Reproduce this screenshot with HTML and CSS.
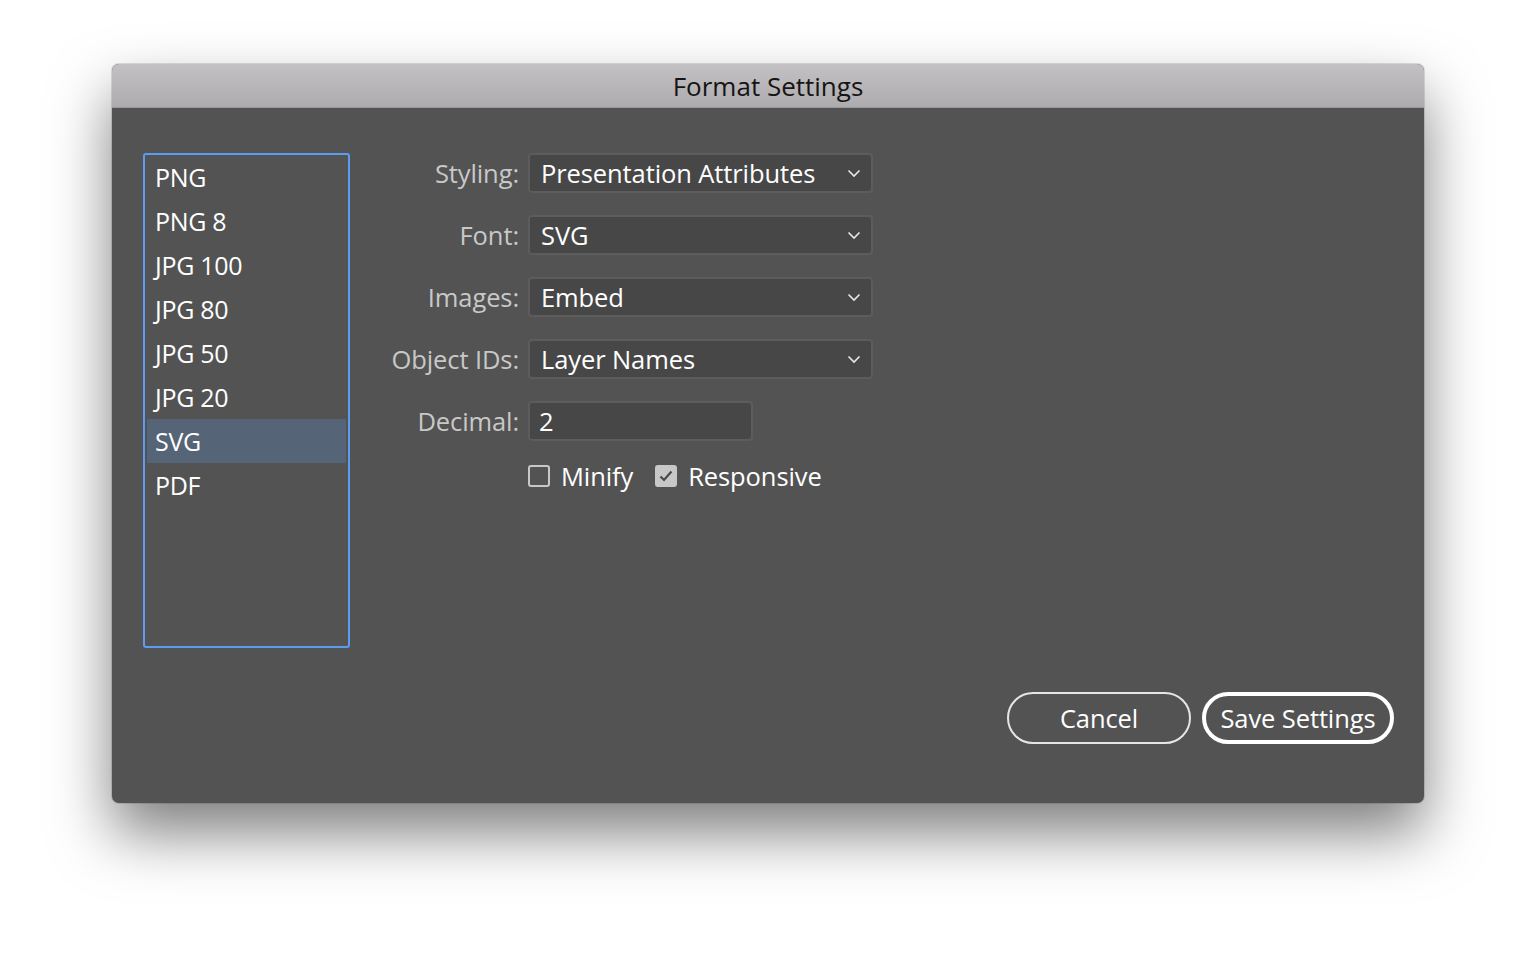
FILE: index.html
```html
<!DOCTYPE html>
<html lang="en">
  <head>
    <meta charset="UTF-8" />
    <title>Format Settings</title>
    <link rel="stylesheet" href="styles.css">
  </head>
  <body>
    <div class="window">
      <div class="titlebar">Format Settings</div>
      <div class="window-body">
        <div class="main">
          <!-- format list -->
          <ul class="format-list">
            <li>PNG</li>
            <li>PNG 8</li>
            <li>JPG 100</li>
            <li>JPG 80</li>
            <li>JPG 50</li>
            <li>JPG 20</li>
            <li class="selected">SVG</li>
            <li>PDF</li>
          </ul>

          <!-- options -->
          <div class="options">
            <div class="row">
              <label>Styling:</label>
              <div class="select">Presentation Attributes
                <svg class="chev" width="14" height="9" viewBox="0 0 14 9"><path d="M1.5 1.5 L7 7 L12.5 1.5" fill="none" stroke="#e8e8e8" stroke-width="1.6"/></svg>
              </div>
            </div>
            <div class="row">
              <label>Font:</label>
              <div class="select">SVG
                <svg class="chev" width="14" height="9" viewBox="0 0 14 9"><path d="M1.5 1.5 L7 7 L12.5 1.5" fill="none" stroke="#e8e8e8" stroke-width="1.6"/></svg>
              </div>
            </div>
            <div class="row">
              <label>Images:</label>
              <div class="select">Embed
                <svg class="chev" width="14" height="9" viewBox="0 0 14 9"><path d="M1.5 1.5 L7 7 L12.5 1.5" fill="none" stroke="#e8e8e8" stroke-width="1.6"/></svg>
              </div>
            </div>
            <div class="row">
              <label>Object IDs:</label>
              <div class="select">Layer Names
                <svg class="chev" width="14" height="9" viewBox="0 0 14 9"><path d="M1.5 1.5 L7 7 L12.5 1.5" fill="none" stroke="#e8e8e8" stroke-width="1.6"/></svg>
              </div>
            </div>
            <div class="row">
              <label>Decimal:</label>
              <div class="input">2</div>
            </div>
            <div class="checks">
              <span class="check"><span class="box"></span>Minify</span>
              <span class="check"><span class="box on">
                <svg width="16" height="14" viewBox="0 0 16 14"><path d="M2.5 7.5 L6 11 L13.5 2.5" fill="none" stroke="#4a4a4a" stroke-width="2.2"/></svg>
              </span>Responsive</span>
            </div>
          </div>
        </div>

        <div class="buttons">
          <button class="btn">Cancel</button>
          <button class="btn primary">Save Settings</button>
        </div>
      </div>
    </div>
  </body>
</html>
```

FILE: styles.css
```css
body {
  margin: 0;
  padding: 0 0 170px;
  background: #fff;
  font-family: "Open Sans", "Liberation Sans", sans-serif;
}
.window {
  margin: 64px 0 0 112px;
  width: 1312px;
  height: 739px;
  border-radius: 7px;
  overflow: hidden;
  background: #535353;
  box-shadow: 0 30px 60px rgba(0, 0, 0, 0.5), 0 0 0 1px rgba(0, 0, 0, 0.12);
  display: flex;
  flex-direction: column;
}
.titlebar {
  height: 43px;
  flex-shrink: 0;
  background: linear-gradient(#c3c1c3, #adabad);
  border-bottom: 1px solid #9a989a;
  color: #151515;
  font-size: 26px;
  line-height: 45px;
  text-align: center;
}
.window-body {
  flex: 1;
  display: flex;
  flex-direction: column;
  padding: 45px 30px 0 31px;
}
.main {
  display: flex;
  gap: 32px;
}
/* Format list */
.format-list {
  list-style: none;
  margin: 0;
  padding: 0 2px;
  width: 207px;
  height: 495px;
  border: 2px solid #5a9cf0;
  border-radius: 3px;
  box-sizing: border-box;
}
.format-list li {
  height: 44px;
  line-height: 44px;
  padding-left: 8px;
  color: #fff;
  font-size: 25px;
  letter-spacing: -0.3px;
}
.format-list li.selected {
  background: #566477;
}
/* Options */
.options {
  display: flex;
  flex-direction: column;
  gap: 22px;
}
.row {
  display: flex;
  align-items: center;
  gap: 9px;
}
.row label {
  width: 137px;
  flex-shrink: 0;
  text-align: right;
  white-space: nowrap;
  color: #c8c8c8;
  font-size: 25.5px;
  letter-spacing: -0.1px;
}
.select,
.input {
  height: 40px;
  box-sizing: border-box;
  background: #474747;
  border: 2px solid #5c5c5c;
  border-radius: 4px;
  color: #fff;
  font-size: 25.5px;
  letter-spacing: -0.1px;
  display: flex;
  align-items: center;
  padding-left: 11px;
}
.select {
  width: 345px;
  justify-content: space-between;
  padding-right: 10px;
}
.input {
  width: 225px;
  padding-left: 9px;
}
.checks {
  display: flex;
  gap: 22px;
  margin: -4px 0 0 146px;
}
.check {
  display: flex;
  align-items: center;
  gap: 11px;
  color: #fff;
  font-size: 25.5px;
  letter-spacing: -0.1px;
}
.box {
  width: 22px;
  height: 22px;
  box-sizing: border-box;
  border: 2px solid #c8c8c8;
  border-radius: 3px;
  display: flex;
  align-items: center;
  justify-content: center;
}
.box.on {
  background: #c8c8c8;
}
/* Buttons */
.buttons {
  display: flex;
  justify-content: flex-end;
  gap: 11px;
  margin-top: 44px;
}
.btn {
  height: 52px;
  border-radius: 26px;
  background: transparent;
  border: 2px solid #e6e6e6;
  color: #fff;
  font-family: inherit;
  font-size: 25.5px;
  letter-spacing: -0.1px;
  width: 184px;
  cursor: pointer;
}
.btn.primary {
  border: 4px solid #fff;
  width: 192px;
}
```
